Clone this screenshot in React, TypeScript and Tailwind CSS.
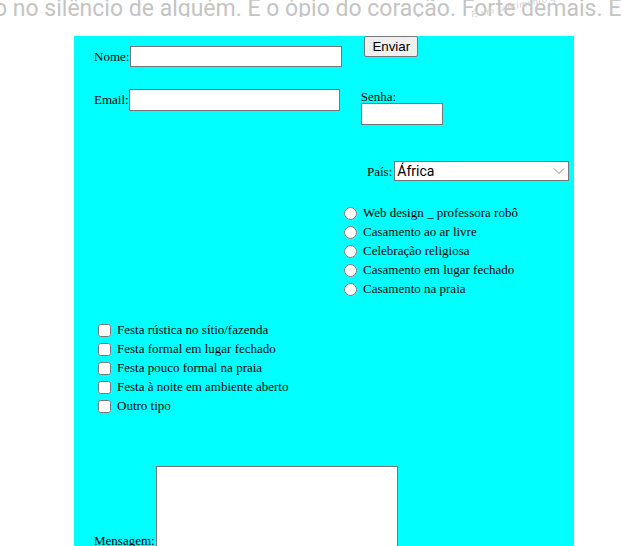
export default function App() {
  const temas = [
    'Web design _ professora robô',
    'Casamento ao ar livre',
    'Celebração religiosa',
    'Casamento em lugar fechado',
    'Casamento na praia',
  ];
  const festas = [
    'Festa rústica no sítio/fazenda',
    'Festa formal em lugar fechado',
    'Festa pouco formal na praia',
    'Festa à noite em ambiente aberto',
    'Outro tipo',
  ];

  return (
    <div className="h-[546px] overflow-hidden bg-white font-['Liberation_Serif',serif] text-[13px] text-black">
      {/* faixa de texto cortada no topo */}
      <div className="relative h-[17px] overflow-hidden">
        <p className="-mt-[6px] -ml-[6px] whitespace-nowrap font-['Roboto',sans-serif] text-[23px] leading-[30px] text-[#c4c4c4]">
          o no silêncio de alguém. É o ópio do coração. Forte demais. É
        </p>
        <span className="absolute left-[470px] top-[0px] -rotate-12 whitespace-nowrap font-['DejaVu_Serif',serif] text-[9px] italic leading-[10px] text-[#cfcfcf]">
          É um sentimento que
        </span>
      </div>

      <form className="ml-[74px] mt-[19px] h-[520px] w-[500px] bg-[#00ffff]">
        {/* Nome + Enviar */}
        <div className="flex items-start">
          <label className="mt-[10px] flex items-center pl-[20px]">
            <span className="mr-[1px]">Nome:</span>
            <input type="text" className="h-[21px] w-[212px] border border-[#767676] bg-white" />
          </label>
          <button
            type="button"
            className="ml-[22px] h-[21px] rounded-[2px] border border-[#767676] bg-[#efefef] px-[7px] font-['Liberation_Sans',sans-serif] text-[13.33px] leading-[19px] text-black"
          >
            Enviar
          </button>
        </div>

        {/* Email + Senha */}
        <div className="mt-[22px] flex items-start">
          <label className="flex items-center pl-[20px]">
            <span>Email:</span>
            <input type="email" className="h-[22px] w-[211px] border border-[#767676] bg-white" />
          </label>
          <label className="ml-[21px] mt-[2px] flex flex-col">
            <span className="leading-[12px]">Senha:</span>
            <input type="password" className="h-[22px] w-[82px] border border-[#767676] bg-white" />
          </label>
        </div>

        {/* País */}
        <div className="mt-[36px] flex items-center pl-[293px]">
          <span className="mr-[2px]">País:</span>
          <div className="relative">
            <select className="h-[20px] w-[175px] appearance-none border border-[#767676] bg-white pl-[2px] font-['Roboto',sans-serif] text-[14px] leading-[18px] text-black">
              <option>África</option>
            </select>
            <svg className="pointer-events-none absolute right-[4px] top-[6px]" width="12" height="8" viewBox="0 0 12 8">
              <path d="M1 1.5 6 6.5 11 1.5" fill="none" stroke="#8a8a8a" strokeWidth="1" />
            </svg>
          </div>
        </div>

        {/* Radios */}
        <div className="mt-[22px] flex flex-col pl-[270px]">
          {temas.map((t) => (
            <label key={t} className="flex h-[19px] items-center">
              <input type="radio" name="tema" className="m-0 h-[13px] w-[13px]" />
              <span className="ml-[6px]">{t}</span>
            </label>
          ))}
        </div>

        {/* Checkboxes */}
        <div className="mt-[22px] flex flex-col pl-[24px]">
          {festas.map((f) => (
            <label key={f} className="flex h-[19px] items-center">
              <input type="checkbox" className="m-0 h-[13px] w-[13px]" />
              <span className="ml-[6px]">{f}</span>
            </label>
          ))}
        </div>

        {/* Mensagem */}
        <div className="mt-[50px] flex items-end pl-[20px]">
          <span className="mr-[1px] leading-[14px]">Mensagem:</span>
          <textarea className="h-[82px] w-[242px] resize-none border border-[#767676] bg-white" />
        </div>
      </form>
    </div>
  );
}
